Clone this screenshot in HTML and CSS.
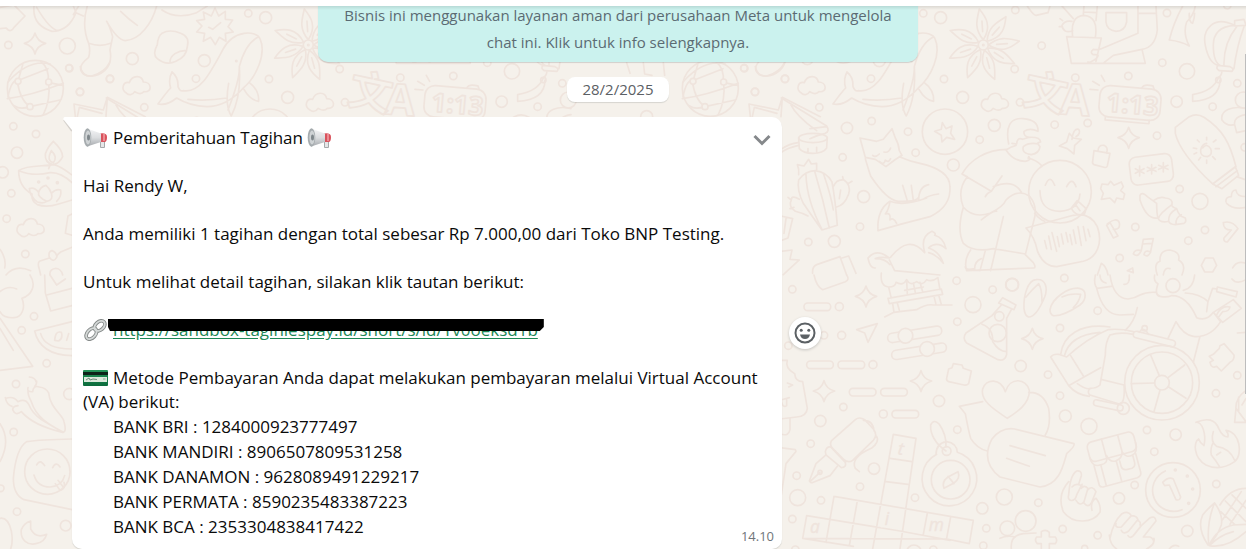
FILE: index.html
```html
<!DOCTYPE html>
<html lang="id">
<head>
<meta charset="utf-8">
<meta name="viewport" content="width=device-width, initial-scale=1">
<title>Chat</title>
<link rel="stylesheet" href="styles.css">
</head>
<body>
<header class="topbar"></header>
<main class="chat">
<svg class="wallpaper" aria-hidden="true">
<defs>
<g id="spark"><path d="M0-31Q7-5 32 0Q6 7 0 32Q-6 7-32 0Q-7-6 0-31Z"/></g>
<g id="cloud"><path d="M-30 22C-50 10-40-14-22-10C-14-34 16-34 20-12C46-12 48 20 22 17C10 30-2 18-6 17C-12 28-24 28-30 22Z"/></g>
<g id="petal"><path d="M0-16C-30-50-18-80-12-108C8-84 26-56 0-16M-2-40L-4-72"/></g>
<g id="tile">
<g transform="translate(675 0) scale(.3333)">
<path d="M0 22L42 15L75 48L42 82Q34 96 25 90L18 84L0 86M102 18Q96 76 156 94Q206 94 228 38L220 18M110 22Q150 90 176 92M220 44L236 18M228 38L250 48M262 18Q244 76 266 130Q272 152 266 172Q236 196 243 212C254 236 290 232 314 212Q338 190 330 150L338 110Q330 80 320 64Q352 120 376 122C420 120 456 70 470 18M266 130Q300 142 332 130M362 34Q386 58 412 76M486 30Q530 60 590 38L622 18"/>
<use href="#spark" x="105" y="130"/>
<circle cx="106" cy="265" r="84"/>
<path d="M24 246Q86 176 150 192M24 290Q34 240 52 242L144 206M22 296Q90 288 190 250M52 244Q60 300 90 320L180 300M144 246Q150 206 122 184M146 248Q152 300 130 344M90 320Q60 330 44 318M146 248L190 256M54 244L68 194"/>
<g fill="#f5f1eb"><circle cx="54" cy="244" r="9"/><circle cx="146" cy="246" r="9"/><circle cx="90" cy="320" r="9"/></g>
<path d="M486 100Q510 86 542 100Q570 110 562 140Q560 170 528 184Q498 198 472 176Q456 164 472 134Q474 108 486 100M560 152C536 150 508 166 510 188"/>
<path d="M645 24L656 48L676 34L676 58L698 60L684 80L700 96L676 100L678 124L658 112L646 134L632 112L610 124L614 100L590 96L606 78L590 62L614 58L610 36L634 48ZM626 82L638 88L662 68"/>
<path d="M516 216Q536 232 534 260Q540 276 550 272C600 280 630 220 668 150C700 86 770 92 780 116C800 160 770 230 730 264Q680 320 620 320Q570 318 530 294Q500 318 474 312Q500 276 512 264Q504 238 516 216M718 200Q736 130 776 110M718 200Q720 240 684 330M718 200Q724 290 694 348Q674 316 686 250M748 248Q778 270 776 304Q750 300 732 268M564 298Q620 304 680 294"/>
<circle cx="709" cy="183" r="2"/>
<g transform="translate(925 135)"><circle r="15"/><circle r="2"/><use href="#petal"/><use href="#petal" transform="rotate(45)"/><use href="#petal" transform="rotate(90)"/><use href="#petal" transform="rotate(127)"/><use href="#petal" transform="rotate(168)"/><use href="#petal" transform="rotate(212)"/><use href="#petal" transform="rotate(255)"/><use href="#petal" transform="rotate(300)"/></g>
<use href="#cloud" x="410" y="258"/>
<path d="M226 350L222 312L310 330L322 292L436 350M232 350L238 322L306 340M322 292L318 350"/>
<path d="M160 424Q188 450 188 470Q178 492 158 494Q134 488 136 462Q142 442 160 424M154 452Q174 472 160 488Q138 484 154 452M150 496L146 506M56 512C80 494 130 500 162 494Q184 500 214 524M56 512Q56 560 96 582Q94 604 112 614Q140 624 176 612L216 600M56 512Q100 530 150 518Q182 516 216 548M88 566Q104 560 116 578Q120 560 138 556Q150 566 154 580Q168 566 182 570Q186 588 170 604M88 566Q90 590 112 606Q130 612 140 604Q112 590 116 578M154 580Q162 600 140 604"/>
<circle cx="116" cy="546" r="3"/><circle cx="144" cy="534" r="3"/><circle cx="172" cy="548" r="3"/>
<use href="#cloud" x="92" y="684"/>
<path d="M216 642L204 648L196 700L216 706M216 742L182 756Q170 764 170 772Q160 790 148 772Q144 754 156 752Q168 756 170 768M148 774L118 784Q112 790 118 808L122 825M0 748Q20 776 14 804M18 825Q46 792 92 812M150 825C146 802 182 796 188 825"/>
<circle cx="25" cy="135" r="11"/><circle cx="202" cy="138" r="24"/><circle cx="207" cy="204" r="10"/><circle cx="397" cy="176" r="18"/><circle cx="330" cy="236" r="11"/><circle cx="240" cy="276" r="11"/><circle cx="433" cy="322" r="11"/><circle cx="745" cy="40" r="11"/><circle cx="797" cy="53" r="18"/><circle cx="613" cy="182" r="18"/><circle cx="588" cy="236" r="11"/><circle cx="807" cy="237" r="11"/><circle cx="863" cy="292" r="18"/><circle cx="40" cy="379" r="11"/><circle cx="108" cy="402" r="11"/><circle cx="51" cy="458" r="17"/><circle cx="8" cy="517" r="17"/><circle cx="34" cy="580" r="11"/><circle cx="20" cy="656" r="11"/><circle cx="76" cy="762" r="11"/>
</g>
<g transform="translate(675 275) scale(.3333)">
<path d="M90 0C110 30 96 60 66 70C78 100 64 128 42 128Q10 130 0 110M0 50Q24 30 50 42M134 0L136 54L152 108L216 92M140 60L216 40M150 0L170 30L196 12M104 168L216 140M104 168Q120 240 216 242M122 176Q134 222 216 222M164 196Q166 166 184 172Q190 190 176 198ZM200 196L206 176M0 130L98 274L0 286M0 160L40 226M84 338Q80 352 98 350Q100 330 118 336Q138 338 146 354C150 400 190 420 192 440Q200 470 190 472C150 450 110 430 94 380Q84 362 84 348M110 318Q110 330 104 334M88 306Q106 308 108 320M18 370Q40 362 54 380Q76 370 86 388Q96 414 124 434Q150 450 188 472Q100 452 64 410Q46 424 38 404Q38 394 54 392M16 368Q20 390 36 394M0 446Q34 496 0 560M216 492Q120 494 80 500Q48 520 40 610Q40 660 72 674L216 704M110 570Q120 550 134 572M158 578Q168 558 180 576M102 600Q112 636 150 636Q186 634 194 602M166 626L180 646Q198 642 192 622M174 616L188 634M0 730Q24 726 34 768Q40 800 32 822M92 738Q72 744 64 764C60 796 84 812 108 806Q134 802 140 778Q106 792 92 762Z"/>
<circle cx="142" cy="590" r="68"/>
<circle cx="102" cy="124" r="11"/><circle cx="65" cy="166" r="11"/><circle cx="140" cy="265" r="11"/><circle cx="48" cy="327" r="11"/><circle cx="208" cy="357" r="17"/><circle cx="41" cy="471" r="11"/><circle cx="2" cy="640" r="10"/><circle cx="51" cy="710" r="11"/><circle cx="197" cy="752" r="16"/>
</g>
<g transform="translate(630 0) scale(.3333)">
<path d="M-10 188L0 220M40 188L44 222L66 226M100 188L104 226M376 200Q382 230 410 228Q448 218 464 188M454 294L590 378Q600 394 586 400Q566 404 540 416M480 310Q500 350 560 392M590 380L540 386M506 414L508 446Q520 460 548 460Q580 460 590 444L592 412M534 446V456M560 442V456M453 458Q470 444 506 436M453 448Q480 430 504 428"/>
<ellipse cx="549" cy="414" rx="43" ry="14"/>
<path d="M506 524Q508 508 502 494L522 498L536 478L544 492L560 490V512M506 540Q524 514 556 512Q590 516 606 546Q616 600 622 676L576 690Q540 640 520 610Q500 570 506 540M528 524Q530 600 576 688M554 514Q580 600 598 684M580 520Q604 590 610 630M508 598Q484 584 484 600Q474 620 496 634Q520 640 534 648M484 600L474 592M492 622L480 626M610 560Q620 536 642 540Q664 554 656 582Q644 616 618 622M640 540L638 530M656 550L666 544M632 570L628 596"/>
<path d="M706 472L690 414L740 424L760 418L786 386L796 414Q806 430 808 452L816 466L794 480L768 500L736 478L706 472M728 466Q736 474 748 462M762 456Q776 460 782 444M748 484Q762 498 766 480Q776 490 782 476M706 476Q716 510 722 528Q770 600 804 604Q860 606 866 592M808 470Q840 484 870 490Q960 510 960 560Q964 620 900 650Q820 670 744 692Q740 630 780 604M780 604Q776 630 766 642Q784 636 780 660Q790 650 800 670M818 556L832 602M844 556L850 602M866 602Q866 560 896 554M882 596Q896 586 926 582M780 604Q820 620 890 594"/>
<circle cx="945" cy="395" r="68"/><path d="M937 368L948 386L966 378L962 400L974 418L950 412L936 426L934 406L914 394L934 388Z"/>
<path d="M453 648L488 656L474 714L453 722M468 656L462 700M453 754L486 750L480 778L508 780L460 824M548 820Q546 800 560 794L630 770L650 825M636 774L656 768L678 820M736 804Q720 806 714 774Q740 744 778 774Q750 770 736 776Q766 776 780 794M782 772Q836 702 884 758M884 756Q870 710 906 694Q920 700 914 706Q940 712 948 746Q920 722 896 744Q930 756 940 790Q920 764 896 758M778 780L794 812L930 825"/>
<circle cx="343" cy="205" r="11"/><circle cx="465" cy="237" r="11"/><circle cx="375" cy="275" r="11"/><circle cx="651" cy="384" r="17"/><circle cx="725" cy="363" r="11"/><circle cx="834" cy="395" r="11"/><circle cx="857" cy="458" r="11"/><circle cx="638" cy="472" r="11"/><circle cx="701" cy="590" r="18"/><circle cx="690" cy="680" r="11"/><circle cx="535" cy="726" r="11"/><circle cx="613" cy="724" r="18"/><circle cx="50" cy="350" r="18"/>
</g>
<g transform="translate(780 275) scale(.3333)">
<path d="M102 0Q110 36 128 44L196 20Q210 14 200 0M304 -6Q300 34 326 36Q346 36 348 22Q370 34 380 14Q390 34 410 20Q428 34 440 14Q456 22 474 8M326 36L334 70M380 18L382 56M400 24L406 52M420 22L428 50M374 46L430 36M474 10L480 44M324 70L484 42L488 58L328 86ZM338 86L342 112M352 84L358 106M462 64L468 88M476 60L484 88M314 126L342 112Q390 106 410 104Q440 86 460 90L516 90"/>
<use href="#spark" x="258" y="64"/><use href="#spark" x="132" y="348"/><use href="#spark" x="423" y="318"/>
<rect x="72" y="84" width="80" height="23" rx="11"/><rect x="80" y="258" width="80" height="23" rx="11"/><rect x="174" y="258" width="80" height="23" rx="11"/><rect x="208" y="340" width="80" height="23" rx="11"/><rect x="302" y="340" width="80" height="23" rx="11"/><rect x="336" y="406" width="80" height="23" rx="11"/>
<path d="M230 164L292 146L264 202L254 174Z"/>
<g transform="rotate(-9 404 177)"><rect x="322" y="164" width="164" height="28" rx="14"/><circle cx="376" cy="178" r="22" fill="#f5f1eb"/></g>
<g transform="rotate(-9 416 228)"><rect x="334" y="215" width="166" height="28" rx="14"/><circle cx="442" cy="226" r="22" fill="#f5f1eb"/></g>
<path d="M656 84L668 68L708 90L702 104ZM664 90L636 122L558 174Q546 190 560 204L654 254Q676 260 680 238L680 130L694 104M606 148Q640 160 638 200Q656 230 680 230"/>
<circle cx="658" cy="124" r="14"/><circle cx="653" cy="174" r="26"/>
<path d="M500 310L506 282L516 278L520 266L546 270L550 280L574 288L566 326Q560 332 552 330L506 320Q498 316 500 310M0 256H22Q14 280 44 296Q46 320 68 320L82 400Q80 424 50 426L0 432M22 324L38 330L26 336M0 376L28 368M4 378Q8 400 20 392L20 374M30 430V464Q26 484 4 478V436M0 518L46 524Q50 530 44 534L18 566L4 660"/>
<path d="M154 498L226 434Q238 424 254 434L280 462Q294 480 280 496L218 556Q204 566 190 552L158 520Q148 510 154 498M136 530Q140 514 152 516L196 562Q200 578 184 578L138 540ZM138 540L108 566L88 618Q92 626 100 622L150 602L172 574M90 620L120 592M250 436Q280 436 282 468M290 484Q300 500 274 520Q210 548 226 580L238 590"/><circle cx="120" cy="592" r="6"/>
<path d="M340 478L408 490L360 822M340 478L278 822M330 550L396 560M318 620L384 628M162 664L580 736L568 806L500 792L68 790L80 722L360 768L510 796M162 664L138 802M232 678L208 812M80 722L300 758M442 714L430 778M512 726L500 790M68 790L220 814"/>
<g class="letters"><text x="352" y="538" transform="rotate(8 352 538)">t</text><text x="90" y="774">a</text><text x="314" y="750">i</text><text x="446" y="768">m</text></g>
<circle cx="512" cy="614" r="58"/><path d="M470 538A82 82 0 1 0 532 532Q530 504 500 500Q468 504 468 540M498 528Q450 494 452 450Q462 430 478 448Q500 480 498 516M534 590Q542 610 522 624L492 640Q484 620 504 606ZM504 604L522 626"/><circle cx="500" cy="528" r="13"/>
<path d="M682 430C650 408 600 380 608 342C618 310 662 308 676 350C690 304 740 310 748 346C750 386 710 412 682 430M608 380L538 394L556 416Q566 470 572 490Q590 520 622 528M746 352Q790 350 806 400Q814 450 796 480M636 492Q664 456 704 462L882 506Q886 514 860 536C850 570 840 630 780 636L660 606Q600 560 636 492M690 512L796 542M680 550L748 574"/>
<circle cx="37" cy="43" r="11"/><circle cx="178" cy="95" r="12"/><circle cx="185" cy="181" r="12"/><circle cx="132" cy="181" r="11"/><circle cx="25" cy="212" r="11"/><circle cx="279" cy="269" r="12"/><circle cx="530" cy="17" r="11"/><circle cx="638" cy="44" r="11"/><circle cx="696" cy="29" r="19"/><circle cx="579" cy="89" r="24"/><circle cx="532" cy="140" r="11"/><circle cx="477" cy="378" r="17"/><circle cx="310" cy="417" r="12"/><circle cx="190" cy="396" r="11"/><circle cx="121" cy="438" r="17"/><circle cx="92" cy="506" r="11"/><circle cx="50" cy="602" r="11"/><circle cx="53" cy="668" r="24"/><circle cx="123" cy="676" r="11"/><circle cx="282" cy="581" r="17"/><circle cx="240" cy="635" r="11"/><circle cx="405" cy="668" r="11"/><circle cx="532" cy="464" r="11"/><circle cx="607" cy="700" r="17"/><circle cx="673" cy="666" r="24"/><circle cx="619" cy="760" r="11"/><circle cx="682" cy="760" r="22"/><circle cx="610" cy="812" r="11"/><circle cx="37" cy="732" r="11"/><circle cx="402" cy="832" r="22"/><circle cx="460" cy="824" r="11"/><circle cx="46" cy="824" r="11"/>
</g>
<g transform="translate(940 0) scale(.3333)">
<path d="M262 18Q280 46 288 46L324 38L330 18M366 18L400 56M382 110L484 114L468 184M380 110L394 190H616L606 148M398 110Q390 48 432 46Q476 50 466 112M398 92Q370 102 366 76Q374 60 396 64M368 62L360 56M366 80H358M432 18L430 42M472 18L468 62M432 36L470 38M498 38H560V66Q554 94 528 94Q500 90 498 66ZM594 18V100L484 146Q474 150 460 148Q448 158 460 164Q484 162 468 176Q450 190 444 186M648 18L652 90Q646 142 606 148L520 166L492 188M594 40H648M728 18Q700 70 688 120Q724 124 748 138Q728 100 740 66Q762 44 766 18M748 40Q746 66 758 70Q764 54 764 40"/>
<path d="M884 76C820 44 786 90 796 136Q806 188 834 196M884 76Q820 80 820 136Q820 190 844 198M890 80Q850 130 852 198M912 80Q890 140 882 206M884 62L912 58L918 76L884 78ZM834 196Q826 206 838 212L876 214Q884 206 870 200ZM846 214Q844 228 836 232Q820 274 758 284V304Q840 300 840 240"/>
<g class="glyphs"><text x="244" y="310" transform="rotate(12 244 310)">文</text><text x="358" y="342" transform="rotate(4 358 342)">A</text></g>
<g transform="rotate(5 570 310)"><rect x="478" y="262" width="184" height="94" rx="30"/><path d="M500 358V366H632V356M602 260Q606 248 634 252L638 260"/><text class="clock" x="500" y="340">1:13</text></g>
<path d="M458 244L478 256M484 226L494 244M450 268L474 270"/>
<use href="#cloud" x="165" y="308"/>
<use href="#spark" x="566" y="413"/>
<path d="M396 418Q400 384 416 388Q424 400 408 410M388 400L400 414L424 418L404 436L402 462L382 446L358 438L380 426ZM462 452L510 460L502 498Q500 504 492 502L462 494Q456 490 458 484ZM474 454Q474 434 492 436Q506 442 500 460"/>
<path d="M206 432C196 380 210 352 250 356Q296 360 294 394Q270 382 252 394Q250 410 268 412L248 418Q232 410 230 432L216 430M268 412Q300 410 302 426Q286 426 300 440Q298 460 274 464Q244 460 250 440Q266 426 296 432M198 450Q212 440 228 436M198 450Q220 484 256 484Q276 480 266 470M200 448C140 448 90 480 66 522L154 574L186 528M66 522L82 530Q50 570 70 622Q100 656 150 640Q190 620 198 600Q236 564 270 590Q294 620 282 660L256 764L280 788Q290 804 280 804L80 812Q70 780 92 750M154 574Q140 580 136 590M160 560Q220 536 244 576M124 660Q160 630 170 634M70 622Q50 690 70 730Q100 758 160 746L256 762M190 650L152 812M136 752L120 812M76 800Q74 812 104 806Q104 784 124 776M264 474Q290 480 304 496"/>
<circle cx="360" cy="575" r="94"/>
<path d="M316 556Q330 520 344 556M380 560Q396 528 408 560M300 572C300 620 330 634 360 634Q416 630 420 582M394 624L412 602L436 624Q440 644 420 646Q400 640 394 624M408 616L420 632M284 640Q300 660 314 664M258 684L400 646Q450 636 472 680C490 730 470 774 430 784L350 800Q310 800 292 752Q284 710 258 684"/>
<path d="M314 722L320 746M326 708L334 748M336 698L350 754M352 710L358 740M364 702L370 732M378 698L384 726M390 704L396 734M400 690L408 730M414 680L424 736M430 680L438 722M444 688L450 710"/>
<path d="M482 566L486 552L504 554L512 544L522 556L544 546L550 560L542 572L554 582L550 598L530 594L524 608L510 594L484 598L490 580Z"/>
<rect x="570" y="466" width="128" height="84" rx="20" transform="rotate(-7 634 508)"/>
<path d="M599 498V528M586 506L612 520M612 506L586 520M635 494V522M622 502L648 514M648 502L622 514M670 488V516M656 496L684 508M684 496L656 508"/>
<path d="M706 382L748 350Q770 338 792 352C850 390 870 430 888 500L818 552Q720 460 706 400ZM818 552L886 500L896 526L846 566ZM828 560L892 512M890 530L918 540"/>
<path d="M788 444Q800 428 812 446Q820 464 802 470Q780 470 782 450Q786 432 800 430M800 412V420M772 420L778 426M828 420L820 426M760 444L770 446M826 446H838M762 462L770 458M776 480L782 472M800 480V490M826 478L818 470"/>
<path d="M600 586Q606 574 622 590L650 610Q650 640 654 654Q620 660 600 600ZM640 602Q660 588 676 594Q700 596 696 614Q694 620 710 626Q714 640 722 648L736 654Q740 666 732 670L706 674Q690 674 686 664Q660 670 654 654M696 614Q660 640 656 654M710 626Q684 640 686 664M724 644Q706 654 708 672"/>
<path d="M500 676L510 668L534 708L520 714ZM502 672Q530 650 538 668Q542 690 520 688M850 668Q876 660 894 686L862 726Q850 726 852 714L874 690Q850 690 850 668M604 752L610 718L640 716L632 754M608 732L636 730M604 752Q594 774 580 762Q584 746 604 752M632 756Q624 774 612 764Q614 748 632 756M652 825Q640 790 660 784Q658 750 690 750Q722 756 716 780Q740 794 726 825M670 825Q674 800 690 806M784 796L796 774H820L830 796L818 816H794ZM472 825L484 790Q500 800 504 825M562 812L578 804L580 818ZM878 804Q890 780 918 790M858 606Q856 590 874 590Q874 570 888 570Q890 590 918 590M860 610Q880 630 918 622M918 326C880 316 840 330 846 360Q860 380 884 374Q880 350 918 344M884 374L890 398L918 392"/>
<circle cx="226" cy="30" r="11"/><circle cx="305" cy="137" r="11"/><circle cx="224" cy="207" r="11"/><circle cx="240" cy="307" r="11"/><circle cx="406" cy="233" r="11"/><circle cx="565" cy="228" r="11"/><circle cx="681" cy="39" r="11"/><circle cx="667" cy="188" r="11"/><circle cx="741" cy="214" r="23"/><circle cx="710" cy="305" r="17"/><circle cx="818" cy="320" r="11"/><circle cx="835" cy="240" r="8"/><circle cx="892" cy="250" r="11"/><circle cx="910" cy="300" r="24"/><circle cx="163" cy="376" r="18"/><circle cx="119" cy="419" r="11"/><circle cx="40" cy="495" r="18"/><circle cx="344" cy="374" r="11"/><circle cx="443" cy="369" r="11"/><circle cx="651" cy="407" r="11"/><circle cx="719" cy="567" r="11"/><circle cx="780" cy="604" r="24"/><circle cx="586" cy="681" r="11"/><circle cx="745" cy="722" r="11"/><circle cx="795" cy="690" r="11"/><circle cx="539" cy="774" r="11"/><circle cx="914" cy="442" r="11"/><circle cx="862" cy="16" r="11"/>
</g>
<g transform="translate(1000 275) scale(.3333)">
<path d="M72 100C70 60 84 16 108 14C138 10 144 40 134 66C120 100 104 126 86 126Q74 122 72 100M78 66Q96 44 116 26Q126 40 126 80M150 104C156 70 204 36 238 40C262 44 260 74 240 90C210 110 180 124 160 122Q150 118 150 104M186 66Q210 54 242 58Q238 80 220 98"/>
<use href="#spark" x="97" y="191"/>
<path d="M286 0Q280 30 292 40L334 34M300 0Q300 20 318 24M330 0Q340 70 384 72Q404 70 420 60Q440 50 468 52M290 40Q310 120 360 120L400 118M412 98Q404 140 376 166M372 28Q390 30 388 0M464 0Q460 20 474 26Q462 60 480 64Q500 68 514 62Q560 60 590 128Q620 140 640 112L662 140Q630 190 580 184Q550 180 528 140L504 190M600 184L580 262M556 54Q600 56 624 80L620 110M584 0Q580 40 550 46M624 80L638 40L650 42M652 36L712 50L708 66L650 50ZM640 112L700 74L724 100L668 142ZM650 120Q664 90 690 96Q688 110 668 110L656 126"/>
<circle cx="519" cy="32" r="21"/>
<path d="M182 238C190 180 240 144 330 156M194 240Q210 180 300 172M152 246Q160 236 176 238L200 246Q260 190 324 164Q360 160 400 170M152 246L206 332L252 306L212 242M330 180Q360 170 400 178M330 180Q316 200 316 240L300 330Q290 340 270 340Q260 352 270 360L360 388Q376 380 372 330L306 314M232 326Q260 346 274 340M206 332Q230 360 268 364M252 306L302 278"/>
<rect x="398" y="182" width="130" height="20" rx="10" transform="rotate(14 463 192)"/><rect x="280" y="382" width="90" height="18" rx="8" transform="rotate(12 325 391)"/><circle cx="370" cy="400" r="18"/><path d="M418 172Q430 152 446 178"/><circle cx="434" cy="160" r="8"/>
<circle cx="486" cy="323" r="112"/><circle cx="486" cy="323" r="92"/><circle cx="486" cy="323" r="22"/><path d="M478 302L452 240M504 308L554 270M506 336L558 370M480 346L462 410M464 324L394 326"/>
<path d="M628 244L640 238L652 226Q660 220 660 212L672 206L702 240Q704 256 690 262L664 288L650 274Q634 282 630 262L640 256ZM738 346Q706 370 708 400L704 442H738M708 400L738 440M716 366V408M738 370L726 390M696 12Q710 30 738 14M712 174L738 172"/>
<g transform="rotate(-15 343 540)"><rect x="270" y="484" width="144" height="60" rx="16"/><path d="M270 530Q270 560 296 558Q320 560 320 536Q324 560 344 558Q364 556 368 536Q374 560 396 554Q414 550 414 520M276 556V616Q278 624 288 624H392Q406 622 406 610V552M344 558V622M318 484V540M368 484V540M296 558V622M354 562V580Q356 592 370 592H384Q396 590 396 576V556"/></g>
<path d="M206 660Q210 600 230 588Q246 586 244 602L236 628M206 660C200 680 224 684 230 660L246 628M216 636Q230 620 250 636M228 676Q240 696 252 680L264 640Q252 628 244 640M252 684Q264 700 274 684L288 650Q276 630 264 644M276 706Q270 680 288 670Q304 690 300 712C280 744 220 750 190 710Q170 660 206 620M462 790Q466 808 440 822M330 790Q340 740 366 716Q386 706 394 722M348 746Q344 760 364 756L394 722Q410 722 414 734M364 766Q370 780 386 768L412 736Q424 740 420 750M384 782Q390 792 400 782L424 752L448 730Q466 720 468 738L430 786H450Q464 792 460 806M328 780Q330 810 350 822"/>
<circle cx="519" cy="645" r="82"/><path d="M496 588A62 62 0 1 0 546 704"/><path d="M488 622Q506 604 520 612L542 666Q540 678 528 674L508 630L494 632Z"/><circle cx="526" cy="585" r="3"/><circle cx="562" cy="603" r="3"/><circle cx="578" cy="642" r="3"/><circle cx="566" cy="685" r="3"/>
<path d="M588 442Q640 420 656 460Q668 486 684 486Q686 474 678 466C720 470 730 540 704 560Q660 590 618 570C580 550 580 500 596 492Q600 504 612 512C620 476 606 440 588 442M640 470Q630 500 650 514Q690 520 704 556M640 502Q630 520 634 540Q650 560 658 574M650 540L662 532"/>
<path d="M624 810Q590 760 608 720Q624 700 644 684Q670 720 664 750Q650 790 624 810M644 684Q620 740 626 806M628 810Q650 760 700 750L738 748M628 812Q680 822 738 770M628 812Q660 780 700 770M660 690Q690 640 738 640M676 678L738 740M696 660L738 700M662 710L704 748M668 734L724 650M690 748L738 676"/>
<path d="M0 790Q20 780 46 786M34 822Q30 780 70 776L108 774M124 786V770Q138 762 148 772V786H166Q174 796 166 806H148V822M124 786H110Q102 796 112 806H124V822M508 822Q520 806 536 814"/>
<circle cx="37" cy="29" r="19"/><circle cx="193" cy="9" r="11"/><circle cx="293" cy="107" r="11"/><circle cx="180" cy="159" r="11"/><circle cx="62" cy="273" r="17"/><circle cx="144" cy="299" r="11"/><circle cx="180" cy="362" r="11"/><circle cx="196" cy="423" r="18"/><circle cx="267" cy="454" r="24"/><circle cx="441" cy="465" r="11"/><circle cx="527" cy="479" r="17"/><circle cx="463" cy="530" r="11"/><circle cx="404" cy="630" r="11"/><circle cx="357" cy="670" r="17"/><circle cx="115" cy="683" r="11"/><circle cx="77" cy="738" r="31"/><circle cx="188" cy="762" r="11"/><circle cx="293" cy="781" r="11"/><circle cx="562" cy="768" r="17"/><circle cx="649" cy="627" r="11"/><circle cx="648" cy="355" r="11"/><circle cx="712" cy="301" r="11"/><circle cx="254" cy="820" r="9"/>
</g>
</g>
</defs>
<g class="doodles" transform="translate(0 -6)"><use href="#tile" x="-675"/><use href="#tile"/><use href="#tile" x="675"/></g>
</svg>

<svg class="defs" aria-hidden="true">
<defs>
<linearGradient id="horn" x1="0" y1="0" x2="0" y2="1"><stop offset="0" stop-color="#f4f5f6"/><stop offset=".5" stop-color="#dcdee0"/><stop offset="1" stop-color="#a6aaae"/></linearGradient>
<linearGradient id="green" x1="0" y1="0" x2="0" y2="1"><stop offset="0" stop-color="#239257"/><stop offset="1" stop-color="#0b6b3c"/></linearGradient>
<symbol id="megaphone" viewBox="0 0 25 22">
<path d="M17.500 13V20.500H21.500V13" fill="#e5e6e7" stroke="#a5a8aa"/>
<path d="M17 6.500Q24 5.500 24 10Q24 14.500 22 15L17 15Z" fill="#d9525c"/><path d="M21 7V14" stroke="#f0a0a4" stroke-width="1.500"/>
<path d="M4 1.500L18 6.500V15L4 19.500Z" fill="url(#horn)"/>
<ellipse cx="4.500" cy="10.500" rx="3.800" ry="9.200" fill="#a5abae"/><ellipse cx="5" cy="10.500" rx="2.600" ry="7" fill="#cfd3d5"/><ellipse cx="5.500" cy="10.500" rx="1.500" ry="3" fill="#7f878b"/>
</symbol>
</defs>
</svg>

<div class="thread">
<button class="notice" type="button">Bisnis ini menggunakan layanan aman dari perusahaan Meta untuk mengelola chat ini. Klik untuk info selengkapnya.</button>
<time class="date" datetime="2025-02-28">28/2/2025</time>
<div class="row">
<article class="bubble">
<svg class="tail" viewBox="0 0 9 15" aria-hidden="true"><path d="M1 3L9 14" stroke="#d5d1cc" stroke-width="2"/><path d="M2 0H9V13L.5 2.500Q0 0 2 0Z" fill="#fff"/></svg>
<button class="more" type="button" aria-label="Menu pesan"><svg viewBox="0 0 18 12"><path d="M1.500 2L9 9.500L16.500 2"/></svg></button>
<p><svg class="emoji"><use href="#megaphone"/></svg>Pemberitahuan Tagihan <svg class="emoji end"><use href="#megaphone"/></svg></p>
<p>Hai Rendy W,</p>
<p>Anda memiliki 1 tagihan dengan total sebesar Rp 7.000,00 dari Toko BNP Testing.</p>
<p>Untuk melihat detail tagihan, silakan klik tautan berikut:</p>
<p><svg class="emoji" viewBox="0 0 25 24" aria-hidden="true"><g fill="none"><g stroke="#858a89" stroke-width="4"><ellipse cx="8" cy="16" rx="7" ry="4.500" transform="rotate(-48 8 16)"/><ellipse cx="17" cy="7.500" rx="6.500" ry="4.500" transform="rotate(-42 17 7.500)"/></g><g stroke="#d5d9d8" stroke-width="2"><ellipse cx="8" cy="16" rx="7" ry="4.500" transform="rotate(-48 8 16)"/><ellipse cx="17" cy="7.500" rx="6.500" ry="4.500" transform="rotate(-42 17 7.500)"/></g></g></svg><span class="redacted"><a href="#">https://sandbox-tagihlespay.id/short/s/id/Yv0oeksd1b</a></span></p>
<p><svg class="emoji" viewBox="0 0 25 22" aria-hidden="true"><rect y="3" width="25" height="16" rx="1" fill="url(#green)"/><rect y="5" width="25" height="3" fill="#0c2218"/><rect x="1" y="10" width="23" height="5" fill="#dce9dc"/><path d="M3 13L6 11L7 13L10 12L14 12.500" stroke="#6f8c7b" fill="none"/><path d="M20 12H22.500" stroke="#8ba596"/></svg>Metode Pembayaran Anda dapat melakukan pembayaran melalui Virtual Account (VA) berikut:</p>
<ul class="banks">
<li>BANK BRI : 1284000923777497</li>
<li>BANK MANDIRI : 8906507809531258</li>
<li>BANK DANAMON : 9628089491229217</li>
<li>BANK PERMATA : 8590235483387223</li>
<li>BANK BCA : 2353304838417422</li>
</ul>
<time class="sent" datetime="14:10">14.10</time>
</article>
<button class="react" type="button" aria-label="Beri reaksi"><svg viewBox="0 0 22 22"><circle cx="11" cy="11" r="9.500" fill="none" stroke="#5b6064" stroke-width="2"/><circle cx="7.200" cy="8.200" r="1.500"/><circle cx="14.800" cy="8.200" r="1.500"/><path d="M6 12.500H16Q15 17 11 17Q7 17 6 12.500Z"/></svg></button>
</div>
</div>
<div class="scrollbar"></div>
</main>
</body>
</html>
```
FILE: styles.css
```css
* { box-sizing: border-box; }

body {
  margin: 0;
  height: 100vh;
  display: flex;
  flex-direction: column;
  overflow: hidden;
  background: #fff;
  color: #0a0a0a;
  font-family: "Segoe UI", "Open Sans", "Noto Sans", sans-serif;
  font-size: 17px;
}

button { border: 0; padding: 0; font: inherit; cursor: pointer; }

.topbar { flex: none; height: 6px; background: #fff; }

.chat {
  position: relative;
  flex: 1;
  min-height: 0;
  overflow: hidden;
  background: #f5f1eb;
}

.chat::after {
  content: "";
  position: absolute;
  inset: 0 0 auto;
  height: 4px;
  background: linear-gradient(rgba(0, 0, 0, .1), transparent);
}

.wallpaper { position: absolute; inset: 0; width: 100%; height: 100%; }
.doodles { fill: none; stroke: #efe4dd; stroke-width: 5; stroke-linejoin: round; stroke-linecap: round; }
.letters { font: italic 52px "Open Sans", sans-serif; stroke-width: 1; fill: #efe4dd; }
.glyphs { font: 700 130px "Open Sans", "Noto Sans CJK SC", sans-serif; }
.clock { font: 700 78px "Open Sans", sans-serif; }
.defs { position: absolute; width: 0; height: 0; }

.thread {
  position: relative;
  display: flex;
  flex-direction: column;
  align-items: center;
  margin-right: 10px;
}

.notice {
  width: 600px;
  max-width: 90%;
  margin-top: -12px;
  padding: 8px 20px 6px;
  border-radius: 10px;
  background: #cbf2ee;
  box-shadow: 0 1px 1px rgba(11, 20, 26, .15);
  color: #5b6b73;
  font-size: 15px;
  line-height: 27px;
  text-align: center;
}

.date {
  margin-top: 15px;
  padding: 0 15px;
  border-radius: 8px;
  background: #fff;
  box-shadow: 0 1px 1px rgba(11, 20, 26, .13);
  color: #5b6064;
  font-size: 15px;
  line-height: 25px;
}

.row {
  align-self: stretch;
  display: flex;
  align-items: center;
  gap: 7px;
  margin-top: 15px;
  padding-left: 72px;
}

.bubble {
  position: relative;
  width: 61%;
  padding: 9px 11px 10px;
  border-radius: 0 10px 10px 10px;
  background: #fff;
  box-shadow: 0 1px 1px rgba(11, 20, 26, .13);
  line-height: 24px;
}

.bubble p { margin: 0 0 24px; }
.bubble p:nth-of-type(6) { margin: 0; }

.tail { position: absolute; top: 0; left: -9px; width: 9px; height: 15px; }

.emoji { width: 25px; height: 22px; margin-right: 5px; vertical-align: -5px; }
.emoji.end { margin-right: 0; }

.more { position: absolute; top: 14px; right: 10px; width: 19px; height: 16px; background: none; }
.more svg { display: block; width: 18px; height: 12px; margin-top: 1px; fill: none; stroke: #85888b; stroke-width: 3; }

.redacted { position: relative; }
.redacted a { color: #1b8755; text-underline-offset: 2px; }
.redacted::after {
  content: "";
  position: absolute;
  top: 1px;
  left: -5px;
  right: -6px;
  height: 13px;
  background: #000;
  clip-path: polygon(0 0, 100% 0, 100% 8px, calc(100% - 4px) 12px, 2px 12px, 0 8px);
}

.banks { margin: 0; padding: 0 0 0 30px; list-style: none; line-height: 25px; }

.sent { position: absolute; right: 8px; bottom: 4px; color: #70757a; font-size: 13px; line-height: 18px; }

.react {
  flex: none;
  display: grid;
  place-items: center;
  width: 32px;
  height: 32px;
  border-radius: 50%;
  background: #fff;
  box-shadow: 0 1px 3px rgba(11, 20, 26, .2);
}
.react svg { width: 22px; height: 22px; fill: #5b6064; }

.scrollbar { position: absolute; top: 48px; right: 0; width: 1px; height: 340px; background: #bdbdbd; }
```
